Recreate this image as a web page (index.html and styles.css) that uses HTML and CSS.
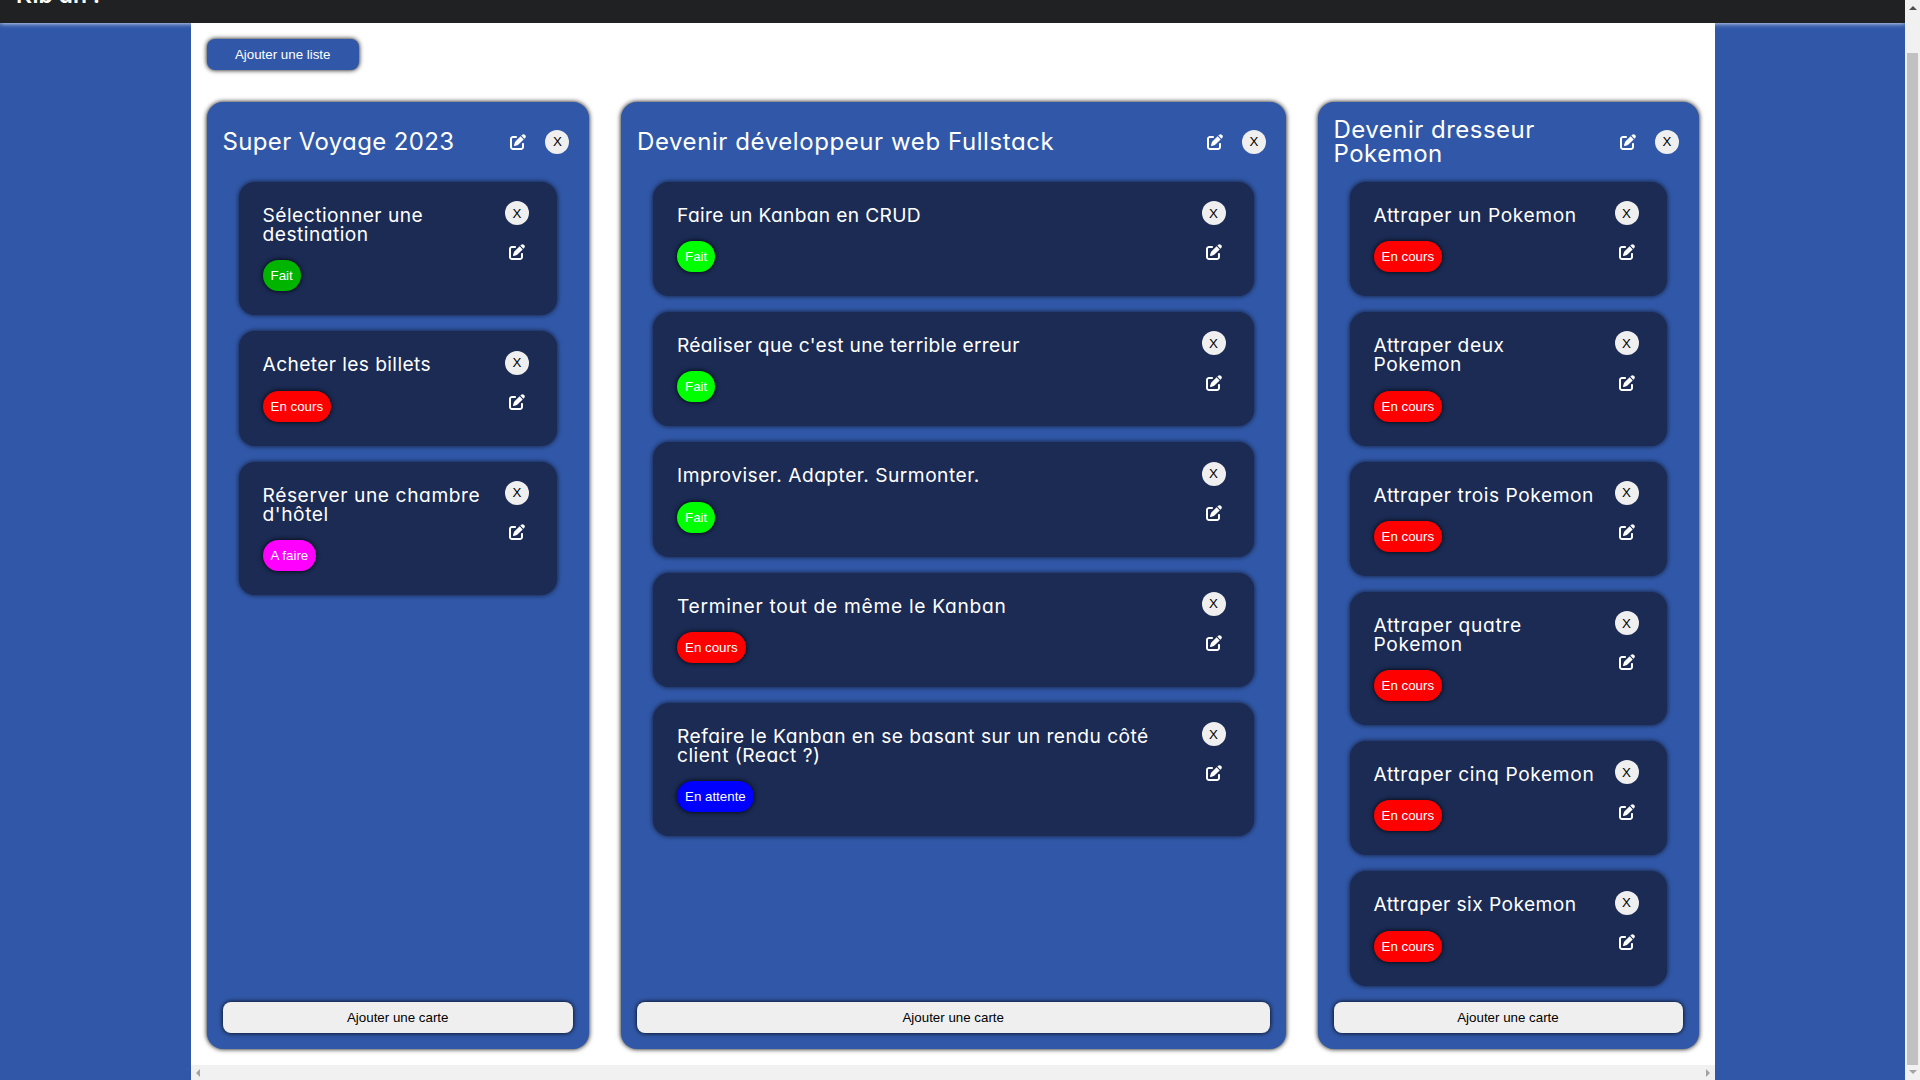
FILE: index.html
```html
<!DOCTYPE html>
<html lang="fr">
<head>
<meta charset="utf-8">
<title>Kanban</title>
<link rel="stylesheet" href="styles.css">
</head>
<body>
<div class="page">
  <header class="topbar"><h1 class="logo">Kib an !</h1></header>
  <main class="main">
    <button class="add-list">Ajouter une liste</button>
    <div class="board" id="board"></div>
    <div class="hscroll"><i class="arrow left"></i><i class="arrow right"></i></div>
  </main>
</div>
<div class="vscroll"><i class="arrow up"></i><div class="thumb"></div><i class="arrow down"></i></div>
<script src="app.js"></script>
</body>
</html>
```
FILE: styles.css
```css
* { box-sizing: border-box; margin: 0; padding: 0; }
body {
  display: flex;
  width: 1920px;
  height: 1080px;
  overflow: hidden;
  font-family: Inter, "Open Sans", sans-serif;
  font-feature-settings: "cv11";
}
button { border: 0; font: 13.333px "Liberation Sans", Arial, sans-serif; }
.page { display: flex; flex-direction: column; width: 1905px; height: 1080px; background: #3158a8; }
.topbar {
  display: flex;
  align-items: flex-end;
  flex: none;
  height: 22.6px;
  padding-left: 16px;
  background: #202122;
  box-shadow: 0 0 5px #fff;
  color: #fff;
}
.logo { font-size: 23px; font-weight: 600; line-height: 24px; margin-bottom: 15.6px; }
.main {
  display: flex;
  flex-direction: column;
  position: relative;
  flex: 1;
  width: 80%;
  margin: 0 auto;
  padding-top: 16px;
  background: #fff;
}
.add-list {
  width: 152.4px;
  height: 31px;
  margin: 0 16px 32px;
  border-radius: 8px;
  background: #3158a8;
  color: #fff;
  box-shadow: 0 0 5px #000;
}
.board {
  display: grid;
  grid-template-columns: 382.5px 664.5px 381px;
  gap: 32px;
  height: 947px;
  margin: 0 16px;
}
.list {
  display: flex;
  flex-direction: column;
  padding: 16px;
  border-radius: 16px;
  background: #3158a8;
  color: #fff;
  box-shadow: 0 0 5px #000;
}
.list-head { display: flex; align-items: center; height: 48px; padding-right: 3.6px; }
.list-title { flex: 1; font-size: 24px; font-weight: 400; line-height: 24px; white-space: nowrap; }
.icon { display: block; width: 16px; height: 16px; fill: #fff; }
.close {
  width: 24px;
  height: 24px;
  border-radius: 50%;
  background: #efefef;
  color: #000;
  text-align: center;
}
.list-head .close { margin-left: 19px; }
.cards { display: flex; flex-direction: column; flex: 1; gap: 16px; padding: 16.3px 16px 15.7px; }
.card {
  display: flex;
  justify-content: space-between;
  padding: 24px 28px 24px 24px;
  border-radius: 16px;
  background: #1b2b54;
  box-shadow: 0 0 4px 1px #1b2b54;
}
.card-title { font-size: 19.2px; font-weight: 400; line-height: 19.2px; white-space: nowrap; }
.badge {
  display: inline-block;
  height: 31px;
  margin-top: 16px;
  padding: 0 8px;
  border-radius: 16px;
  font: 13.333px/31px "Liberation Sans", Arial, sans-serif;
  box-shadow: 0 0 5px #000;
  vertical-align: top;
}
.done-dark { background: #00b400; }
.done { background: #0f0; }
.doing { background: #f00; }
.todo { background: #f0f; }
.waiting { background: #00f; }
.tools { display: flex; flex-direction: column; align-items: center; gap: 19.2px; margin-top: -4.7px; }
.add-card { height: 31px; border-radius: 8px; background: #efefef; color: #000; box-shadow: 0 0 5px #000; }
.hscroll {
  display: flex;
  align-items: center;
  justify-content: space-between;
  height: 15px;
  margin-top: auto;
  padding: 0 5px;
  background: #f1f1f1;
}
.vscroll {
  display: flex;
  flex-direction: column;
  align-items: center;
  width: 15px;
  height: 1080px;
  padding: 6px 0;
  background: #f1f1f1;
}
.thumb { width: 11px; height: 1012px; margin: 43px 0 5px; background: #c1c1c1; }
.arrow { width: 0; height: 0; border: 4px solid transparent; }
.left { border-left: 0; border-right-color: #a3a3a3; }
.right { border-right: 0; border-left-color: #a3a3a3; }
.up { border-top: 0; border-bottom-color: #505050; }
.down { border-bottom: 0; border-top-color: #a3a3a3; }
```
FILE: app.js
```js
const icon = '<svg class="icon" viewBox="0 0 512 512"><path d="M471.6 21.7c-21.900-21.900-57.300-21.900-79.200 0L362.300 51.700l97.900 97.900 30.100-30.100c21.900-21.900 21.900-57.300 0-79.200L471.600 21.700zM172.400 241.700c-6.100 6.100-10.800 13.600-13.500 21.900l-29.600 88.800c-2.900 8.600-.6 18.100 5.800 24.600s15.900 8.700 24.600 5.800l88.800-29.600c8.200-2.700 15.700-7.400 21.900-13.500L437.700 172.300 339.700 74.300 172.400 241.700zM96 64C43 64 0 107 0 160V416c0 53 43 96 96 96H352c53 0 96-43 96-96V320c0-17.700-14.300-32-32-32s-32 14.300-32 32v96c0 17.700-14.300 32-32 32H96c-17.700 0-32-14.300-32-32V160c0-17.700 14.300-32 32-32h96c17.700 0 32-14.300 32-32s-14.300-32-32-32H96z"/></svg>';
const labels = { 'done-dark': 'Fait', done: 'Fait', doing: 'En cours', todo: 'A faire', waiting: 'En attente' };
// The last value of each entry is the title's letter spacing in pixels.
const lists = [
  ['Super Voyage 2023', [
    ['Sélectionner une<br>destination', 'done-dark', 0.48],
    ['Acheter les billets', 'doing', 0.39],
    ["Réserver une chambre<br>d'hôtel", 'todo', 0.58]], 0.36],
  ['Devenir développeur web Fullstack', [
    ['Faire un Kanban en CRUD', 'done', 0.33],
    ["Réaliser que c'est une terrible erreur", 'done', 0.29],
    ['Improviser. Adapter. Surmonter.', 'done', 0.48],
    ['Terminer tout de même le Kanban', 'doing', 0.7],
    ['Refaire le Kanban en se basant sur un rendu côté<br>client (React ?)', 'waiting', 0.47]], 0.58],
  ['Devenir dresseur<br>Pokemon', [
    ['Attraper un Pokemon', 'doing', 0.6],
    ['Attraper deux<br>Pokemon', 'doing', 0.55],
    ['Attraper trois Pokemon', 'doing', 0.54],
    ['Attraper quatre<br>Pokemon', 'doing', 0.66],
    ['Attraper cinq Pokemon', 'doing', 0.62],
    ['Attraper six Pokemon', 'doing', 0.43]], 0.48]
];
const card = ([title, state, spacing]) => `<article class="card"><div><h3 class="card-title" style="letter-spacing:${spacing}px">${title}</h3><span class="badge ${state}">${labels[state]}</span></div><div class="tools"><button class="close">X</button>${icon}</div></article>`;
document.getElementById('board').innerHTML = lists.map(([title, cards, spacing]) =>
  `<section class="list"><div class="list-head"><h2 class="list-title" style="letter-spacing:${spacing}px">${title}</h2>${icon}<button class="close">X</button></div><div class="cards">${cards.map(card).join('')}</div><button class="add-card">Ajouter une carte</button></section>`).join('');
```
